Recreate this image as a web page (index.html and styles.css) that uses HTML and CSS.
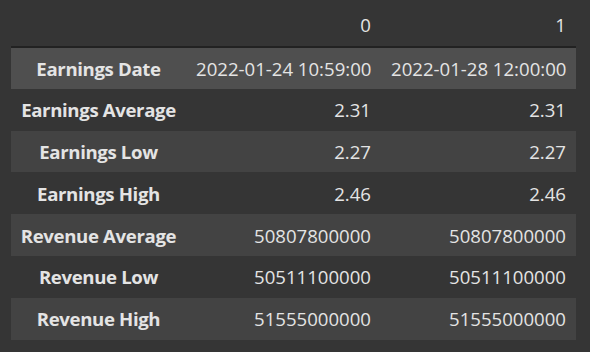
FILE: index.html
```html
<!DOCTYPE html>
<html lang="en">
<head>
  <meta charset="UTF-8" />
  <title>Earnings</title>
  <link rel="stylesheet" href="styles.css">
</head>
<body>
  <div class="output">
    <table class="dataframe">
      <thead>
        <tr>
          <th></th>
          <th>0</th>
          <th>1</th>
        </tr>
      </thead>
      <tbody>
        <tr class="hover">
          <th>Earnings Date</th>
          <td>2022-01-24 10:59:00</td>
          <td>2022-01-28 12:00:00</td>
        </tr>
        <tr>
          <th>Earnings Average</th>
          <td>2.31</td>
          <td>2.31</td>
        </tr>
        <tr>
          <th>Earnings Low</th>
          <td>2.27</td>
          <td>2.27</td>
        </tr>
        <tr>
          <th>Earnings High</th>
          <td>2.46</td>
          <td>2.46</td>
        </tr>
        <tr>
          <th>Revenue Average</th>
          <td>50807800000</td>
          <td>50807800000</td>
        </tr>
        <tr>
          <th>Revenue Low</th>
          <td>50511100000</td>
          <td>50511100000</td>
        </tr>
        <tr>
          <th>Revenue High</th>
          <td>51555000000</td>
          <td>51555000000</td>
        </tr>
      </tbody>
    </table>
  </div>
</body>
</html>
```

FILE: styles.css
```css
:root {
  --bg: #353535;
  --stripe: #434343;
  --hover: #4f4f4f;
  --line: #222222;
  --text: #e4e4e4;
}

* {
  margin: 0;
  padding: 0;
  box-sizing: border-box;
}
body {
  background-color: var(--bg);
  color: var(--text);
  font-family: 'Open Sans', 'Noto Sans', sans-serif;
  font-size: 18.6px;
}
.output {
  padding-left: 11px;
}

/* DataFrame table */
.dataframe {
  border-collapse: collapse;
  border-spacing: 0;
  table-layout: fixed;
  width: 565px;
}
.dataframe thead tr {
  height: 47px;
  border-bottom: 2px solid var(--line);
}
.dataframe thead th {
  text-align: right;
  vertical-align: bottom;
  font-weight: 400;
  padding: 0 10px 9px;
}
.dataframe thead th:first-child {
  width: 175px;
}
.dataframe tbody tr {
  height: 41.8px;
}
.dataframe tbody tr:nth-child(odd) {
  background-color: var(--stripe);
}
.dataframe tbody tr.hover {
  background-color: var(--hover);
}
.dataframe tbody th {
  text-align: center;
  font-weight: 700;
  letter-spacing: -0.35px;
  padding: 0 8px;
  white-space: nowrap;
}
.dataframe td {
  text-align: right;
  padding: 0 10px;
  white-space: nowrap;
}
```
